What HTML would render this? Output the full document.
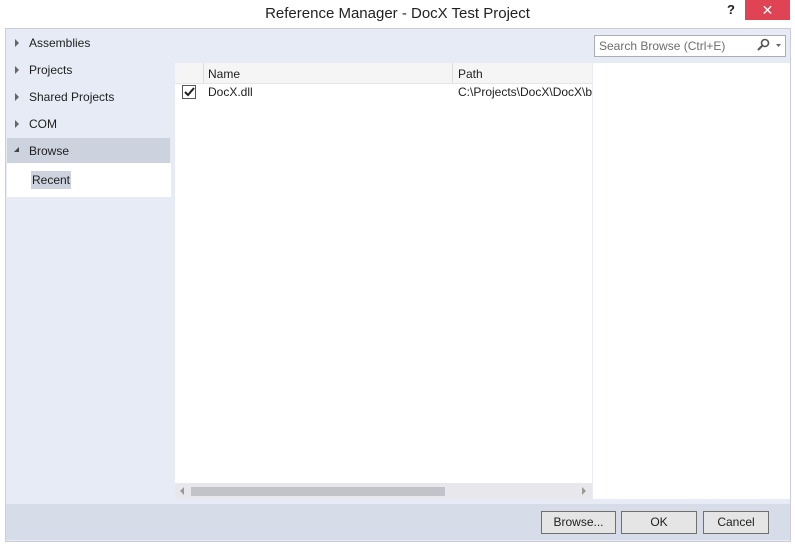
<html><head><style>
body{margin:0;width:795px;height:544px;background:#fff;font-family:"Liberation Sans",sans-serif;font-size:12px;color:#1e1e1e;position:relative;overflow:hidden}
.a{position:absolute}
.nav{left:29px;font-size:12px}
.tri{left:15px;width:0;height:0;border-top:4px solid transparent;border-bottom:4px solid transparent;border-left:4px solid #666}
.btn{top:511px;height:21px;border:1px solid #707070;background:#e5e5e5;text-align:center;line-height:21px;font-size:12px}
</style></head><body>
<div class="a" style="left:0;top:5px;width:795px;text-align:center;font-size:15px;color:#222">Reference Manager - DocX Test Project</div>
<div class="a" style="left:727px;top:2px;font-weight:bold;font-size:13px">?</div>
<div class="a" style="left:745px;top:0;width:45px;height:20px;background:#e04353;color:#fff;text-align:center;line-height:20px;font-size:14px">✕</div>
<div class="a" style="left:5px;top:28px;width:784px;height:512px;border:1px solid #ccd;background:#e6ebf5"></div>
<div class="a tri" style="top:39px"></div><div class="a nav" style="top:36px">Assemblies</div>
<div class="a tri" style="top:66px"></div><div class="a nav" style="top:63px">Projects</div>
<div class="a tri" style="top:93px"></div><div class="a nav" style="top:90px">Shared Projects</div>
<div class="a tri" style="top:120px"></div><div class="a nav" style="top:117px">COM</div>
<div class="a" style="left:7px;top:138px;width:163px;height:25px;background:#ccd2de"></div>
<div class="a" style="left:14px;top:147px;width:0;height:0;border-left:5px solid transparent;border-bottom:5px solid #444"></div>
<div class="a nav" style="top:144px">Browse</div>
<div class="a" style="left:7px;top:163px;width:164px;height:34px;background:#fff"></div>
<div class="a" style="left:31px;top:171px;width:40px;height:18px;background:#ccd2de;line-height:18px;text-align:center;font-size:12px">Recent</div>
<div class="a" style="left:594px;top:35px;width:190px;height:20px;border:1px solid #abadb3;background:#fff"></div>
<div class="a" style="left:599px;top:39px;color:#6d6d6d;font-size:12px">Search Browse (Ctrl+E)</div>
<svg class="a" style="left:756px;top:38px" width="28" height="14"><circle cx="9" cy="5" r="3.5" fill="none" stroke="#555" stroke-width="1.6"/><line x1="6.5" y1="7.5" x2="2" y2="12" stroke="#555" stroke-width="2"/><path d="M20 6h5l-2.5 3z" fill="#666"/></svg>
<div class="a" style="left:175px;top:63px;width:417px;height:436px;background:#fff"></div>
<div class="a" style="left:593px;top:63px;width:197px;height:436px;background:#fff"></div>
<div class="a" style="left:175px;top:63px;width:417px;height:20px;background:#f5f5f5;border-bottom:1px solid #e5e5e5"></div>
<div class="a" style="left:203px;top:63px;width:1px;height:20px;background:#ddd"></div>
<div class="a" style="left:452px;top:63px;width:1px;height:20px;background:#ddd"></div>
<div class="a" style="left:208px;top:67px;font-size:12px">Name</div>
<div class="a" style="left:458px;top:67px;font-size:12px">Path</div>
<div class="a" style="left:182px;top:85px;width:12px;height:12px;border:1px solid #555;background:#fff"></div>
<svg class="a" style="left:183px;top:86px" width="12" height="12"><path d="M2 6l3 3 6-7" fill="none" stroke="#222" stroke-width="2"/></svg>
<div class="a" style="left:208px;top:85px;font-size:12px">DocX.dll</div>
<div class="a" style="left:458px;top:85px;width:134px;overflow:hidden;white-space:nowrap;font-size:12px">C:\Projects\DocX\DocX\bin</div>
<div class="a" style="left:175px;top:483px;width:417px;height:16px;background:#e8e8ec"></div>
<div class="a" style="left:191px;top:487px;width:254px;height:9px;background:#c2c3c9"></div>
<div class="a" style="left:180px;top:487px;width:0;height:0;border-top:4px solid transparent;border-bottom:4px solid transparent;border-right:4px solid #999"></div>
<div class="a" style="left:582px;top:487px;width:0;height:0;border-top:4px solid transparent;border-bottom:4px solid transparent;border-left:4px solid #999"></div>
<div class="a" style="left:6px;top:504px;width:784px;height:36px;background:#d6dde8"></div>
<div class="a btn" style="left:541px;width:73px">Browse...</div>
<div class="a btn" style="left:621px;width:74px">OK</div>
<div class="a btn" style="left:703px;width:64px">Cancel</div>
</body></html>
